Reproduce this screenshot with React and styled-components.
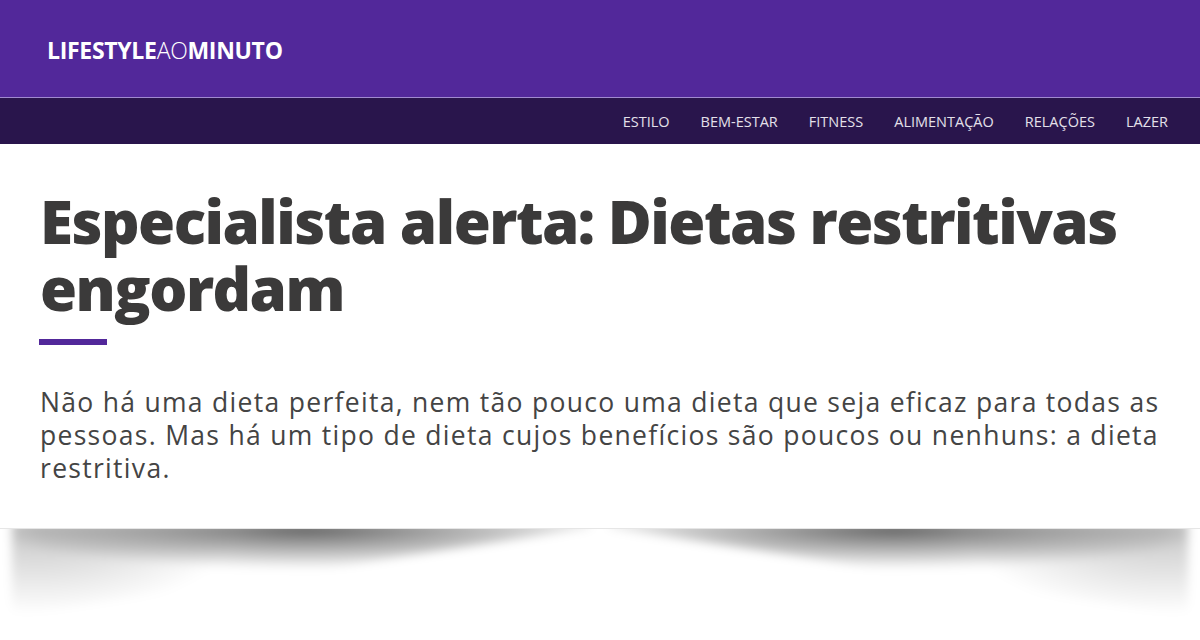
import React from 'react'
import styled, { createGlobalStyle } from 'styled-components'

const Global = createGlobalStyle`
  html, body {
    margin     : 0 ;
    padding    : 0 ;
    background : #ffffff ;
    font-family: "Open Sans", "Liberation Sans", sans-serif ;
  }
`

const Page = styled.div`
  width    : 1200px ;
  height   : 640px ;
  overflow : hidden ;
`

const TopBar = styled.header`
  height        : 97px ;
  background    : #52289a ;
  border-bottom : 1px solid #a08ad0 ;
  display       : flex ;
  align-items   : center ;
  padding-left  : 47px ;
  box-sizing    : content-box ;
`

const Logo = styled.div`
  color          : #ffffff ;
  font-size      : 23px ;
  letter-spacing : -0.3px ;
  font-weight    : 700 ;
  margin-top     : 2px ;
`

const Light = styled.span`
  font-weight : 300 ;
`

const Nav = styled.nav`
  height          : 46px ;
  background      : #29154c ;
  display         : flex ;
  justify-content : flex-end ;
  align-items     : center ;
  gap             : 31px ;
  padding-right   : 32px ;
`

const NavItem = styled.a`
  color          : #e4e0ea ;
  font-size      : 14.5px ;
  text-transform : uppercase ;
  text-decoration: none ;
`

const Wrap = styled.div`
  position : relative ;
`

const Card = styled.article`
  position      : relative ;
  z-index       : 1 ;
  background    : #ffffff ;
  border-bottom : 1px solid #e6e6e6 ;
  padding       : 44px 30px 0 40px ;
  box-sizing    : border-box ;
  height        : 385px ;
`

const Title = styled.h1`
  margin         : 0 ;
  color          : #3b3a3a ;
  font-size      : 60px ;
  line-height    : 67px ;
  font-weight    : 800 ;
  letter-spacing : -1.5px ;
`

const Rule = styled.div`
  width      : 68px ;
  height     : 6px ;
  background : #52289a ;
  margin     : 17px 0 0 -1px ;
`

const Lead = styled.p`
  margin         : 41px 0 0 0 ;
  color          : #444444 ;
  font-size      : 26.5px ;
  line-height    : 33px ;
  letter-spacing : 1.3px ;
  font-weight    : 400 ;
`

const ShadowBlur = styled.div`
  position  : absolute ;
  z-index   : 0 ;
  top       : 378px ;
  width     : 585px ;
  height    : 100px ;
  left      : ${p => p.$side === 'left' ? '6px' : 'auto'} ;
  right     : ${p => p.$side === 'right' ? '6px' : 'auto'} ;
  transform : ${p => p.$side === 'right' ? 'scaleX(-1)' : 'none'} ;
  filter    : blur(5px) ;
`

const ShadowShape = styled.div`
  width      : 100% ;
  height     : 100% ;
  background :
    radial-gradient(ellipse 320px 40px at 300px 7px, rgba(0,0,0,0.6), rgba(0,0,0,0) 100%),
    radial-gradient(ellipse 200px 85px at 30px 7px, rgba(0,0,0,0.22), rgba(0,0,0,0) 100%);
  clip-path  : polygon(1% 0, 100% 0, 100% 6%, 3% 92%, 1% 92%);
`

const items = ['Estilo', 'Bem-Estar', 'Fitness', 'Alimentação', 'Relações', 'Lazer']

const App = () => {
  return (
    <>
      <Global />
      <Page>
        <TopBar>
          <Logo>LIFESTYLE<Light>AO</Light>MINUTO</Logo>
        </TopBar>
        <Nav>
          {items.map(i => <NavItem key={i}>{i}</NavItem>)}
        </Nav>
        <Wrap>
          <Card>
            <Title>Especialista alerta: Dietas restritivas engordam</Title>
            <Rule />
            <Lead>
              Não há uma dieta perfeita, nem tão pouco uma dieta que seja eficaz para todas as pessoas. Mas há um tipo de dieta cujos benefícios são poucos ou nenhuns: a dieta restritiva.
            </Lead>
          </Card>
          <ShadowBlur $side='left'><ShadowShape /></ShadowBlur>
          <ShadowBlur $side='right'><ShadowShape /></ShadowBlur>
        </Wrap>
      </Page>
    </>
  )
}

export default App
